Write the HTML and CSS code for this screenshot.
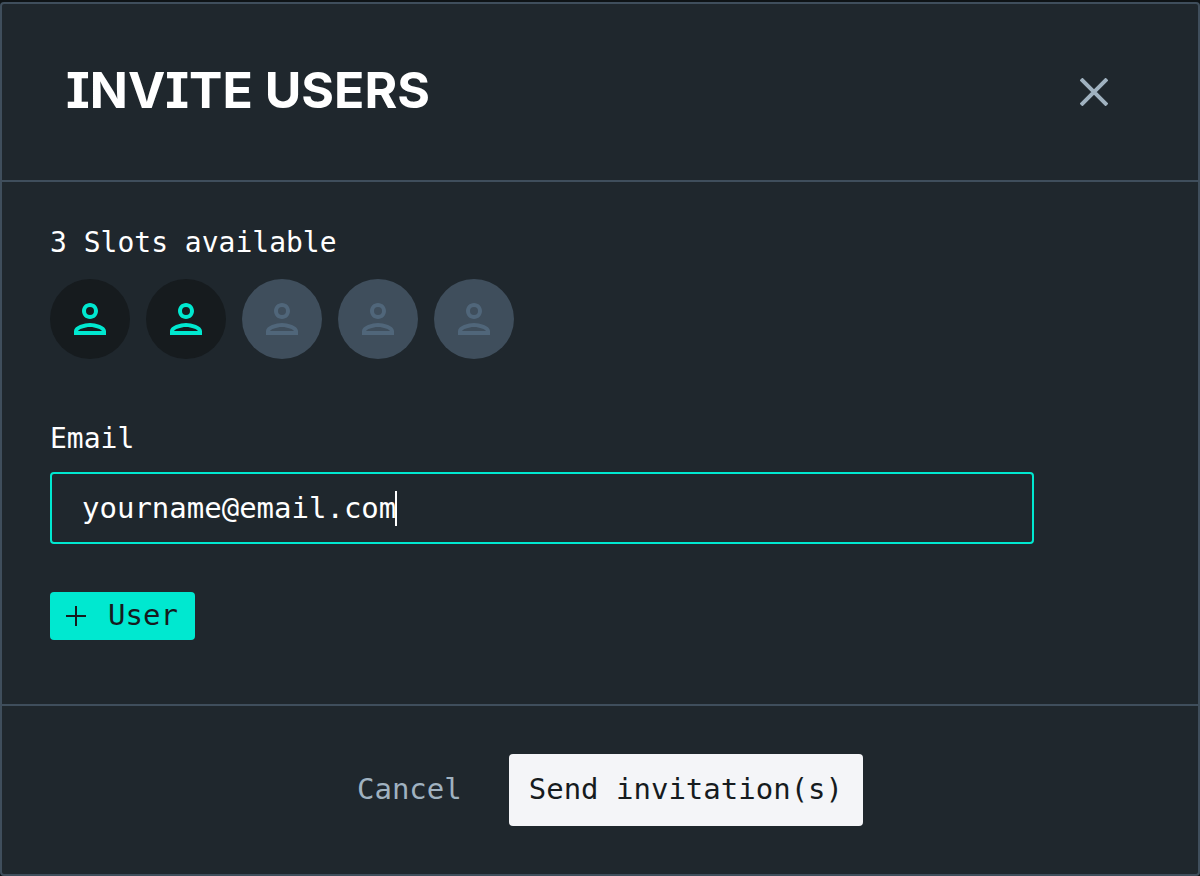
FILE: index.html
```html
<!DOCTYPE html>
<html lang="en">
<head>
<meta charset="utf-8">
<title>Invite users</title>
<link rel="stylesheet" href="styles.css">
</head>
<body>
<svg class="sprite" aria-hidden="true">
  <symbol id="person" viewBox="4 4 16 16">
    <path d="M12 6a2 2 0 1 1 0 4 2 2 0 0 1 0-4m0-2C9.790 4 8 5.790 8 8s1.790 4 4 4 4-1.790 4-4-1.790-4-4-4zM12 16c2.700 0 5.800 1.290 6 2H6c.23-.72 3.310-2 6-2m0-2c-2.670 0-8 1.340-8 4v2h16v-2c0-2.660-5.330-4-8-4z"/>
  </symbol>
</svg>
<main class="modal" role="dialog" aria-labelledby="title">
  <header class="modal-header">
    <h1 class="title" id="title">INVITE USERS</h1>
    <button class="close" type="button" aria-label="Close">
      <svg viewBox="0 0 28 28"><path d="M1 1l26 26M27 1L1 27"/></svg>
    </button>
  </header>
  <form class="modal-form">
    <div class="modal-body">
      <p class="label">3 Slots available</p>
      <ul class="slots">
        <li class="slot used"><svg><use href="#person"/></svg></li>
        <li class="slot used"><svg><use href="#person"/></svg></li>
        <li class="slot"><svg><use href="#person"/></svg></li>
        <li class="slot"><svg><use href="#person"/></svg></li>
        <li class="slot"><svg><use href="#person"/></svg></li>
      </ul>
      <label class="label" for="email">Email</label>
      <div class="field">
        <input class="input" id="email" type="text" inputmode="email" value="yourname@email.com" spellcheck="false">
        <span class="caret" aria-hidden="true"></span>
      </div>
      <button class="button add" type="button">
        <svg viewBox="0 0 20 20"><path d="M10 0v20M0 10h20"/></svg>
        <span class="button-text">User</span>
      </button>
    </div>
    <footer class="modal-footer">
      <button class="button cancel" type="button"><span class="button-text">Cancel</span></button>
      <button class="button send" type="submit"><span class="button-text">Send invitation(s)</span></button>
    </footer>
  </form>
</main>
</body>
</html>
```
FILE: styles.css
```css
* {
  box-sizing: border-box;
}

body {
  margin: 0;
  padding-top: 2px;
  min-height: 100vh;
  display: flex;
  background: #0e1316;
  color: #ffffff;
  font-family: "DejaVu Sans Mono", monospace;
  font-size: 28px;
}

.sprite {
  position: absolute;
  width: 0;
  height: 0;
}

.modal {
  flex: 1;
  display: flex;
  flex-direction: column;
  background: #1f272d;
  border: 2px solid #3f4e5c;
  border-radius: 4px;
}

.modal-header {
  display: flex;
  align-items: center;
  justify-content: space-between;
  padding: 56px 86px 56px 64px;
  border-bottom: 2px solid #3f4e5c;
}

.title {
  margin: 0;
  padding-bottom: 4px;
  font-family: Inter, sans-serif;
  font-size: 50px;
  font-weight: 700;
  line-height: 60px;
  font-feature-settings: "cv08";
}

.close {
  display: flex;
  padding: 4px;
  border: 0;
  background: none;
}

.close svg {
  width: 28px;
  height: 28px;
  stroke: #a0b2c0;
  stroke-width: 4;
}

.modal-form {
  flex: 1;
  display: flex;
  flex-direction: column;
}

.modal-body {
  flex: 1;
  display: flex;
  flex-direction: column;
  align-items: flex-start;
  padding: 41px 164px 64px 48px;
}

.label {
  margin: 0;
  line-height: 40px;
}

.slots {
  display: flex;
  gap: 16px;
  margin: 16px 0 60px;
  padding: 0;
  list-style: none;
}

.slot {
  display: flex;
  align-items: center;
  justify-content: center;
  width: 80px;
  height: 80px;
  border-radius: 50%;
  background: #3f4e5c;
  color: #50667a;
}

.slot.used {
  background: #161b1e;
  color: #00e8d0;
}

.slot svg {
  width: 32px;
  height: 32px;
  fill: currentColor;
}

.field {
  position: relative;
  align-self: stretch;
  margin: 13px 0 48px;
  font-size: 29px;
}

.input {
  display: block;
  width: 100%;
  height: 72px;
  padding: 0 30px;
  border: 2px solid #00e8d0;
  border-radius: 4px;
  outline: 0;
  background: transparent;
  color: inherit;
  font: inherit;
}

.caret {
  position: absolute;
  top: 19px;
  left: calc(31px + 18ch);
  width: 2px;
  height: 35px;
  background: #ffffff;
}

.button {
  display: flex;
  align-items: center;
  justify-content: center;
  height: 72px;
  padding: 0 20px;
  border: 0;
  border-radius: 4px;
  background: none;
  color: #161b1e;
  font: inherit;
  font-size: 29px;
}

.button-text {
  padding-bottom: 3px;
}

.add {
  height: 48px;
  padding: 0 17px 0 16px;
  gap: 22px;
  background: #00e8d0;
}

.add svg {
  width: 20px;
  height: 20px;
  stroke: currentColor;
  stroke-width: 2;
}

.modal-footer {
  display: flex;
  justify-content: center;
  gap: 27px;
  padding: 48px;
  border-top: 2px solid #3f4e5c;
}

.cancel {
  color: #a0b2c0;
}

.send {
  background: #f4f5f8;
}
```
